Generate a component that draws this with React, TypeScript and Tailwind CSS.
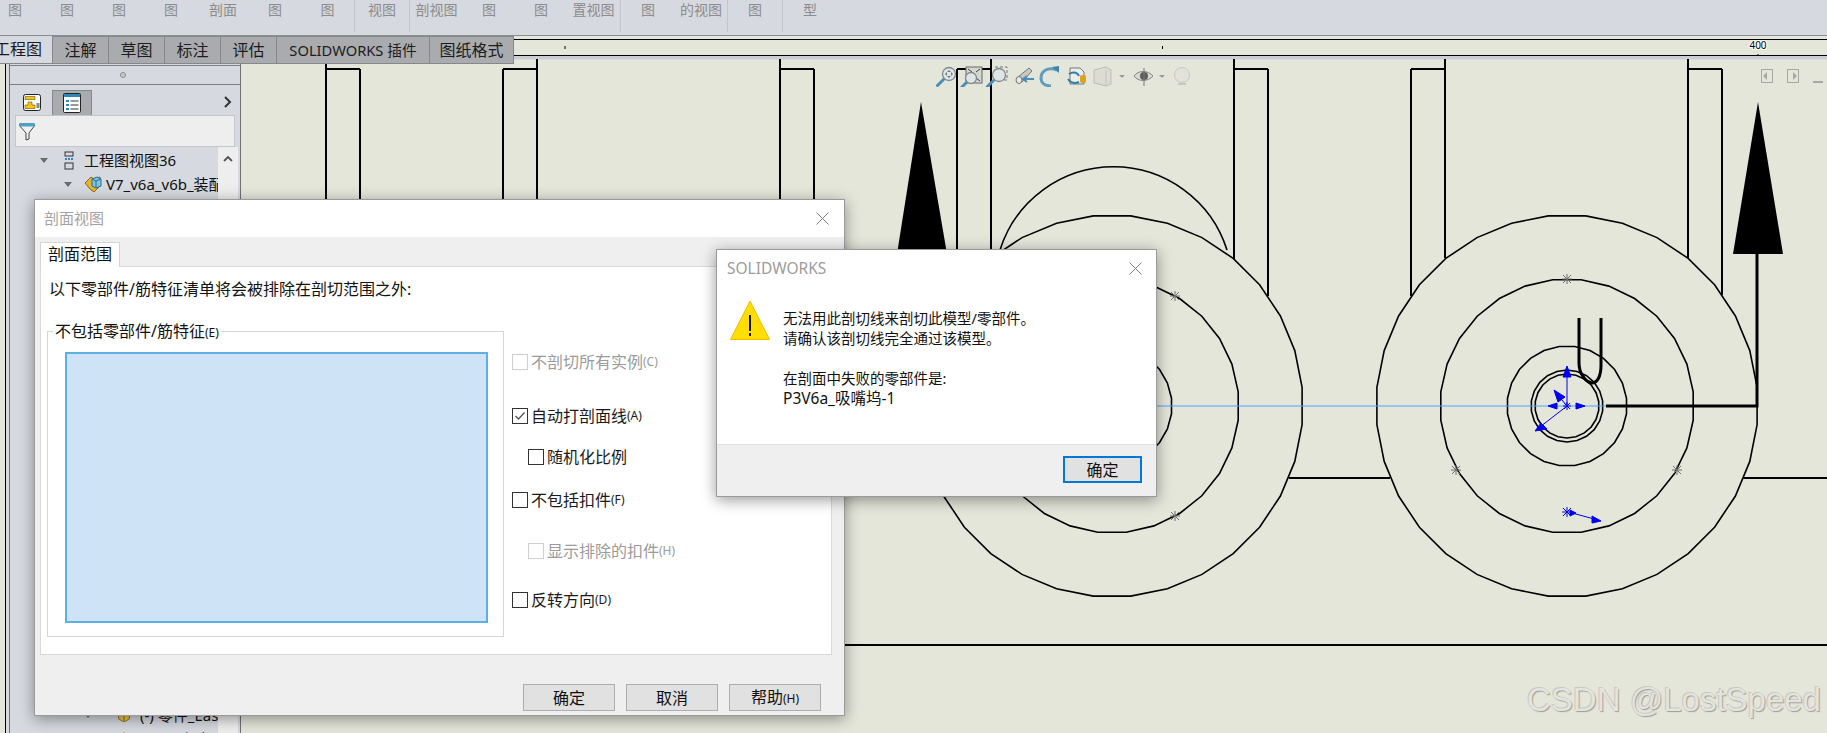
const ring = (cx: number, cy: number, r: number, n: number) =>
  Array.from({ length: n }, (_, i) => {
    const a = (i / n) * Math.PI * 2 + Math.PI / n;
    return `${(cx + r * Math.cos(a)).toFixed(1)},${(cy + r * Math.sin(a)).toFixed(1)}`;
  }).join(" ");

const star = (x: number, y: number, c: string, s = 5) => (
  <g stroke={c} strokeWidth="1" key={`${x}-${y}`}>
    <path d={`M${x - s} ${y}H${x + s}M${x} ${y - s}V${y + s}M${x - s + 1} ${y - s + 1}L${x + s - 1} ${y + s - 1}M${x - s + 1} ${y + s - 1}L${x + s - 1} ${y - s + 1}`} />
  </g>
);

// model view behind the dialogs, page coordinates
function Drawing() {
  const thin =
    "M326 59V300M360 69V300M326 69H360M503 69V300M537 59V300M503 69H537M780 59V300M814 69V300M780 69H814" +
    "M957 69V295M991 59V258M957 69H991M1234 59V259M1268 69V296M1234 69H1268M1411 69V296M1445 59V258M1411 69H1445" +
    "M1688 59V258M1722 69V295M1688 69H1722M1289 478H1390M1743 478H1827M845 645H1827";
  return (
    <svg className="absolute inset-0 h-full w-full" viewBox="0 0 1827 733" fill="none">
      <rect x="514" y="56" width="1313" height="3.5" fill="#c9cdd6" />
      <path d="M514 39.5H1827M514 55.5H1827" stroke="#000" strokeWidth="1" />
      <path d="M565 46V49M1162.5 46V49M1758 39V41M1758 54V55" stroke="#000" strokeWidth="1" />
      <text x="1758" y="49" textAnchor="middle" fontSize="10" fill="#000" stroke="#fff" strokeWidth="2" paintOrder="stroke">400</text>
      <path d={thin} stroke="#000" strokeWidth="2" />
      <path d="M1000 250A119 119 0 0 1 1227 250" stroke="#000" strokeWidth="1.6" />
      <polygon points="921,102 897,254 947,254" fill="#000" />
      <polygon points="1758,102 1733,254 1783,254" fill="#000" />
      {[191, 127, 60].map((r, i) => (
        <polygon key={r} points={ring(1112, 406, r, [32, 28, 24][i])} stroke="#000" strokeWidth="1.6" />
      ))}
      {[191, 127, 60, 36, 32].map((r, i) => (
        <polygon key={r} points={ring(1567, 406, r, [32, 28, 24, 22, 22][i])} stroke="#000" strokeWidth="1.6" />
      ))}
      <path d="M1140 406H1606" stroke="#4ba3ff" strokeWidth="1.2" />
      <path d="M1606 406H1757V254" stroke="#000" strokeWidth="3" />
      <path d="M1579 318V363C1579 373 1585 382 1592 383C1598 383 1601 375 1601 365V318" stroke="#000" strokeWidth="3" />
      {star(1567, 279, "#6f6f6f")}
      {star(1456, 470, "#6f6f6f")}
      {star(1677, 470, "#6f6f6f")}
      {star(1175, 296, "#6f6f6f")}
      {star(1175, 516, "#6f6f6f")}
      <g stroke="#0000f0" strokeWidth="1" fill="#0000f0">
        <path d="M1567 406V372M1567 406L1556 393M1567 406L1536 430M1572 513L1598 520" />
        <polygon points="1567,366 1563,377 1571,377" />
        <polygon points="1548,406 1557,403 1557,409" />
        <polygon points="1585,406 1576,403 1576,409" />
        <polygon points="1554,390 1565,397 1558,402" />
        <polygon points="1535,431 1541,423 1547,429" />
        <polygon points="1601,521 1592,516 1592,523" />
        <polygon points="1576,513 1570,510 1570,516" />
      </g>
      {star(1567, 406, "#0000f0", 4)}
      {star(1567, 512, "#0000f0", 5)}
    </svg>
  );
}

function Lens({ x, y, r = 6.5 }: { x: number; y: number; r?: number }) {
  return (
    <>
      <path d={`M${x - r + 1} ${y + r - 1}L${x - r - 5} ${y + r + 5}`} stroke="#4a8db5" strokeWidth="3" strokeLinecap="round" />
      <circle cx={x} cy={y} r={r} fill="#dfe5e6" stroke="#7d8a90" strokeWidth="1.3" />
    </>
  );
}

function HeadsUp() {
  return (
    <svg className="absolute left-[934px] top-[65px] h-[22px] w-[262px]" viewBox="0 0 262 22" fill="none">
      <Lens x={15} y={9} />
      <path d="M15 5l2 2h-4zM15 13l2-2h-4zM11 9l2-2v4zM19 9l-2-2v4z" fill="#777" />
      <rect x="32" y="2" width="16" height="16" fill="#d5d6cd" stroke="#666" />
      <path d="M34 4l4 3M46 4l-4 3M46 16l-4-3" stroke="#444" />
      <Lens x={37} y={13} r={5.5} />
      <rect x="61" y="2" width="12" height="13" stroke="#777" strokeDasharray="3 2" />
      <Lens x={65} y={10} />
      <path d="M84 12L95 3l3 3-10 11z" fill="#c8c9c4" stroke="#777" />
      <ellipse cx="85" cy="15" rx="3" ry="3.5" fill="#e8e8e4" stroke="#777" />
      <path d="M100 14H90M93 11l-4 3 4 3" stroke="#4a8db5" strokeWidth="2" />
      <path d="M123 5C113 1 107 7 107 13C107 18 111 21 117 21" stroke="#5e9dbf" strokeWidth="3" />
      <polygon points="118,2 125,1 125,8" fill="#3f83a8" />
      <path d="M136 3h10l4 4v12h-14z" fill="#ecece8" stroke="#777" />
      <path d="M135 9C140 6 144 8 145 11M145 17C140 19 136 17 134 14" stroke="#2e7dad" strokeWidth="2" />
      <rect x="146" y="10" width="6" height="8" rx="2" fill="#d9a520" />
      <path d="M160 5l12-3 5 3v14l-5 2-12-3z" fill="#dcdcd3" stroke="#bdbdb4" />
      <path d="M172 21V5" stroke="#c4c4bb" />
      <path d="M185 10h6l-3 3z" fill="#9b9b95" />
      <path d="M200 11C204 5 214 5 219 11C214 17 204 17 200 11Z" fill="#d9d9d2" stroke="#8a8a85" />
      <circle cx="210" cy="11" r="4" fill="#5d5d5d" />
      <path d="M210 3V21" stroke="#777" />
      <path d="M225 10h6l-3 3z" fill="#9b9b95" />
      <circle cx="248" cy="10" r="7.5" fill="#e2e2da" stroke="#c8c8c0" />
      <path d="M244 19h8" stroke="#c8c8c0" strokeWidth="2" />
    </svg>
  );
}

function Check({ label, hot, checked, disabled, nested, gap }: { label: string; hot?: string; checked?: boolean; disabled?: boolean; nested?: boolean; gap: string }) {
  return (
    <div className={`flex h-[16px] items-center ${gap} ${nested ? "ml-[16px]" : ""} ${disabled ? "text-[#9b9b9b]" : "text-[#1a1a1a]"}`}>
      <span className={`flex h-[16px] w-[16px] shrink-0 items-center justify-center border bg-white ${disabled ? "border-[#cfcfcf]" : "border-[#333333]"}`}>
        {checked && (
          <svg viewBox="0 0 14 14" className="h-[14px] w-[14px]" fill="none">
            <path d="M2.5 7l3 3 6-6.5" stroke="#555" strokeWidth="1.3" />
          </svg>
        )}
      </span>
      <span className="ml-[3px] whitespace-nowrap text-[16px] leading-[20px]">{label}</span>
      {hot && <span className="text-[12px] leading-[20px]">{hot}</span>}
    </div>
  );
}

function Close() {
  return (
    <svg viewBox="0 0 13 13" className="h-[13px] w-[13px]" fill="none">
      <path d="M0.5 0.5L12.5 12.5M12.5 0.5L0.5 12.5" stroke="#7d7d7d" />
    </svg>
  );
}

function TreeRow({ indent, label, icon }: { indent: string; label: string; icon: React.ReactNode }) {
  return (
    <div className={`flex h-[24px] items-center whitespace-nowrap text-[15px] leading-[24px] text-[#111] ${indent}`}>
      <svg viewBox="0 0 8 5" className="h-[5px] w-[8px] shrink-0">
        <path d="M0 0h8L4 5z" fill="#6b6b6b" />
      </svg>
      {icon}
      <span>{label}</span>
    </div>
  );
}

const cubeShape = (
  <>
    <path d="M1 8l6-6 3 2 6-2v9l-6 6-4-3z" fill="#e3b52e" stroke="#8a6a12" />
    <path d="M8 4l5-2 4 2v7l-5 2-4-2z" fill="#7fc3de" stroke="#2c6f8e" />
    <path d="M12 6v7M8 4l4 2 5-2" stroke="#2c6f8e" fill="none" />
  </>
);

const cube = (
  <svg viewBox="0 0 18 18" className="ml-[12px] mr-[4px] h-[18px] w-[18px] shrink-0">{cubeShape}</svg>
);

const smallCube = (
  <svg viewBox="0 0 18 18" className="ml-[25px] mr-[9px] h-[14px] w-[14px] shrink-0">
    <path d="M2 6l7-5 7 5v8l-7 4-7-4z" fill="#e8c64a" stroke="#7a5d10" />
    <path d="M2 6l7 4 7-4M9 10v8" stroke="#7a5d10" fill="none" />
  </svg>
);

const topItems = [
  ["图", "w-[52px]"], ["图", "w-[52px]"], ["图", "w-[52px]"], ["图", "w-[52px]"], ["剖面", "w-[52px]"], ["图", "w-[52px]"], ["图", "w-[53px]"],
  ["|", ""],
  ["视图", "w-[54px]"],
  ["|", ""],
  ["剖视图", "w-[53px]"], ["图", "w-[52px]"], ["图", "w-[52px]"], ["置视图", "w-[53px]"],
  ["|", ""],
  ["图", "w-[54px]"], ["的视图", "w-[52px]"],
  ["|", ""],
  ["图", "w-[54px]"],
  ["|", ""],
  ["型", "w-[54px]"],
];

const tabs = [
  ["注解", "w-[56px] text-[16px]"],
  ["草图", "w-[56px] text-[16px]"],
  ["标注", "w-[56px] text-[16px]"],
  ["评估", "w-[56px] text-[16px]"],
  ["SOLIDWORKS 插件", "w-[153px] text-[14.7px]"],
  ["图纸格式", "w-[84px] text-[16px]"],
];

export default function App() {
  return (
    <div className="relative flex h-[733px] w-[1827px] flex-col overflow-hidden bg-[#e5e6da] font-['Noto_Sans','Noto_Sans_CJK_SC',sans-serif]">
      <Drawing />

      {/* ribbon */}
      <div className="relative flex h-[36px] shrink-0 border-b border-[#8a8d92] bg-[#d6d9df]">
        <div className="-ml-[11px] flex">
          {topItems.map(([t, w], i) =>
            t === "|" ? (
              <div key={i} className="h-[32px] w-px bg-[#c2c5ca]" />
            ) : (
              <div key={i} className={`${w} text-center text-[14px] leading-[19px] text-[#8c8c8c]`}>{t}</div>
            )
          )}
        </div>
      </div>

      {/* command tabs */}
      <div className="absolute left-0 top-[36px] z-10 flex h-[28px] border-b border-[#85878b] leading-[27px] text-[#1c1c1c]">
        <div className="w-[53px] overflow-hidden whitespace-nowrap border-r border-[#85878b] bg-[#d6d9df] pl-[2px] text-[16px]">
          <span className="-ml-[8px] block">工程图</span>
        </div>
        {tabs.map(([t, w]) => (
          <div key={t} className={`${w} whitespace-nowrap border-r border-t border-[#85878b] bg-[#a9abaf] text-center`}>{t}</div>
        ))}
      </div>

      {/* feature manager */}
      <div className="relative ml-[5px] flex min-h-0 w-[236px] flex-1 border-l border-black bg-[#d6d9df] pl-[3px]">
        <div className="flex w-full flex-col border-l border-r border-[#6f7175]">
          <div className="mt-[29px] flex h-[20px] shrink-0 items-center justify-center border-y border-[#7c7e83] bg-[#d6d9df]">
            <span className="ml-[-4px] h-[6px] w-[6px] rounded-full border border-[#8f8f8f] bg-[#c8c8c8]" />
          </div>
          <div className="mt-[5px] flex h-[25px] shrink-0 pl-[2px]">
            <div className="flex w-[40px] items-center justify-center">
              <svg viewBox="0 0 18 17" className="h-[17px] w-[18px]">
                <rect x="0.5" y="0.5" width="17" height="16" rx="2" fill="#fff" stroke="#222" />
                <path d="M2 2.5h10v3H2zM5 8h4v3h3v3.5H2V11h3z" fill="#f3c419" stroke="#6b5400" strokeWidth=".6" />
                <path d="M13.5 9h3v5h-3z" fill="#888" />
              </svg>
            </div>
            <div className="flex w-[40px] items-center justify-center border-x border-t border-[#85878b] bg-[#a9abaf]">
              <svg viewBox="0 0 18 20" className="h-[20px] w-[18px]">
                <rect x="0.5" y="0.5" width="17" height="19" rx="1" fill="#fff" stroke="#222" />
                <rect x="1" y="1" width="16" height="3" fill="#2e86b8" />
                <path d="M3 7h3v2H3zM3 11h3v2H3zM3 15h3v2H3z" fill="#2e86b8" />
                <path d="M7.5 8h8M7.5 12h8M7.5 16h8" stroke="#333" />
              </svg>
            </div>
            <svg viewBox="0 0 8 12" className="ml-[132px] mt-[6px] h-[12px] w-[8px]" fill="none">
              <path d="M1 1l5 5-5 5" stroke="#333" strokeWidth="2" />
            </svg>
          </div>
          <div className="mx-[5px] flex h-[32px] shrink-0 items-center border border-[#c4c6cb] bg-[#eeeeee] pl-[2px]">
            <svg viewBox="0 0 18 19" className="h-[19px] w-[18px]">
              <path d="M1 3h16L11 11v6l-3 1v-7z" fill="#f2f2f2" stroke="#444" />
              <rect x="1" y="1" width="16" height="3.5" rx="1" fill="#4da3c6" />
            </svg>
          </div>
          <div className="flex min-h-0 flex-1 overflow-hidden pr-[2px]">
            <div className="min-w-0 flex-1 overflow-hidden pt-px">
              <TreeRow
                indent="pl-[30px]"
                label="工程图视图36"
                icon={
                  <svg viewBox="0 0 10 19" className="ml-[16px] mr-[10px] h-[19px] w-[10px] shrink-0" fill="none">
                    <rect x="1" y="1" width="8" height="4" stroke="#333" />
                    <path d="M1 8h2M4 8h2M7 8h2" stroke="#2e86b8" strokeWidth="2" />
                    <rect x="1" y="12" width="8" height="6" stroke="#333" />
                  </svg>
                }
              />
              <TreeRow indent="pl-[54px]" label="V7_v6a_v6b_装配体" icon={cube} />
              <div className="h-[507px]" />
              <TreeRow indent="pl-[74px]" label="(-) 零件_Eash" icon={smallCube} />
              <TreeRow indent="pl-[74px]" label="(-) P1-主座" icon={smallCube} />
            </div>
            <div className="flex w-[20px] shrink-0 justify-center bg-[#eeeeee] pt-[8px]">
              <svg viewBox="0 0 10 7" className="h-[7px] w-[10px]" fill="none">
                <path d="M1 6l4-4 4 4" stroke="#555" strokeWidth="1.8" />
              </svg>
            </div>
          </div>
        </div>
      </div>

      <HeadsUp />

      {/* window buttons, top right */}
      <div className="absolute left-[1761px] top-[69px] flex items-start">
        <div className="flex h-[14px] w-[12px] items-center border border-[#a8a8a2] pl-[1px]">
          <span className="h-0 w-0 border-y-[4px] border-r-[4px] border-y-transparent border-r-[#a8a8a2]" />
        </div>
        <div className="ml-[14px] flex h-[14px] w-[12px] items-center justify-end border border-[#a8a8a2] pr-[1px]">
          <span className="h-0 w-0 border-y-[4px] border-l-[4px] border-y-transparent border-l-[#a8a8a2]" />
        </div>
        <div className="ml-[14px] mt-[12px] h-[2px] w-[10px] bg-[#a8a8a2]" />
      </div>

      {/* 剖面视图 dialog */}
      <div className="absolute left-[34px] top-[199px] z-20 flex h-[517px] w-[811px] flex-col border border-[#9a9a9a] bg-[#efefef] shadow-[0_3px_14px_rgba(0,0,0,0.4)]">
        <div className="flex h-[37px] shrink-0 items-center justify-between bg-white pl-[9px] pr-[15px] text-[15px] text-[#a3a3a3]">
          <span>剖面视图</span>
          <Close />
        </div>
        <div className="relative z-10 ml-[5px] mt-[5px] h-[25px] w-[80px] shrink-0 border border-b-0 border-[#d5d5d5] bg-white text-center text-[16px] leading-[22px] text-[#111]">
          剖面范围
        </div>
        <div className="-mt-px ml-[5px] h-[389px] w-[792px] shrink-0 border border-[#d9d9d9] bg-white">
          <p className="ml-[8px] mt-[12px] h-[20px] whitespace-nowrap text-[16px] leading-[20px] text-[#111]">
            以下零部件/筋特征清单将会被排除在剖切范围之外:
          </p>
          <div className="ml-[6px] mt-[32px] flex">
            <div className="relative h-[306px] w-[457px] shrink-0 border border-[#d7d7d7]">
              <div className="absolute -top-[11px] left-[5px] whitespace-nowrap bg-white px-[2px] leading-[20px] text-[#111]">
                <span className="text-[16px]">不包括零部件/筋特征</span>
                <span className="text-[12px]">(E)</span>
              </div>
              <div className="ml-[17px] mt-[20px] h-[271px] w-[423px] border-2 border-[#5cb0e4] bg-[#cfe3f7]" />
            </div>
            <div className="ml-[8px]">
              <Check gap="mt-[23px]" disabled label="不剖切所有实例" hot="(C)" />
              <Check gap="mt-[38px]" checked label="自动打剖面线" hot="(A)" />
              <Check gap="mt-[25px]" nested label="随机化比例" />
              <Check gap="mt-[27px]" label="不包括扣件" hot="(F)" />
              <Check gap="mt-[35px]" nested disabled label="显示排除的扣件" hot="(H)" />
              <Check gap="mt-[33px]" label="反转方向" hot="(D)" />
            </div>
          </div>
        </div>
        <div className="ml-[488px] mt-[29px] flex gap-[11px]">
          <button className="h-[27px] w-[92px] border border-[#adadad] bg-[#e1e1e1] text-[16px] leading-[24px] text-[#111]">确定</button>
          <button className="h-[27px] w-[92px] border border-[#adadad] bg-[#e1e1e1] text-[16px] leading-[24px] text-[#111]">取消</button>
          <button className="h-[27px] w-[92px] border border-[#adadad] bg-[#e1e1e1] leading-[24px] text-[#111]">
            <span className="text-[16px]">帮助</span>
            <span className="text-[12px]">(H)</span>
          </button>
        </div>
      </div>

      {/* SOLIDWORKS message box */}
      <div className="absolute left-[716px] top-[249px] z-30 flex h-[248px] w-[441px] flex-col border border-[#9a9a9a] bg-white shadow-[0_3px_14px_rgba(0,0,0,0.4)]">
        <div className="flex h-[37px] shrink-0 items-center justify-between pl-[10px] pr-[14px] text-[15.5px] text-[#9c9c9c]">
          <span>SOLIDWORKS</span>
          <Close />
        </div>
        <div className="flex flex-1 pl-[13px] pt-[13px]">
          <svg viewBox="0 0 40 40" className="h-[40px] w-[40px] shrink-0">
            <polygon points="20,1 39.5,39.5 0.5,39.5" fill="#ffde00" stroke="#f6b800" />
            <path d="M20 15V31" stroke="#111" strokeWidth="2" />
            <path d="M20 33V36" stroke="#111" strokeWidth="2" />
          </svg>
          <div className="ml-[13px] whitespace-nowrap pt-[8px] text-[14.5px] leading-[20px] text-[#111]">
            <p>无法用此剖切线来剖切此模型/零部件。</p>
            <p>请确认该剖切线完全通过该模型。</p>
            <p className="mt-[20px]">在剖面中失败的零部件是:</p>
            <p className="text-[15.5px]">P3V6a_吸嘴坞-1</p>
          </div>
        </div>
        <div className="flex h-[52px] shrink-0 items-start justify-end border-t border-[#dfdfdf] bg-[#efefef] pr-[14px] pt-[11px]">
          <button className="h-[27px] w-[79px] border-2 border-[#0078d7] bg-[#e1e1e1] text-[16px] leading-[22px] text-[#111]">确定</button>
        </div>
      </div>

      <div className="absolute left-[1527px] top-[680px] z-40 whitespace-nowrap font-['Liberation_Sans',sans-serif] text-[33px] leading-[40px] text-[#e3e3df] [text-shadow:1px_1px_1px_#9d9d98,-1px_-1px_0_#c9c9c4]">
        CSDN @LostSpeed
      </div>
    </div>
  );
}
